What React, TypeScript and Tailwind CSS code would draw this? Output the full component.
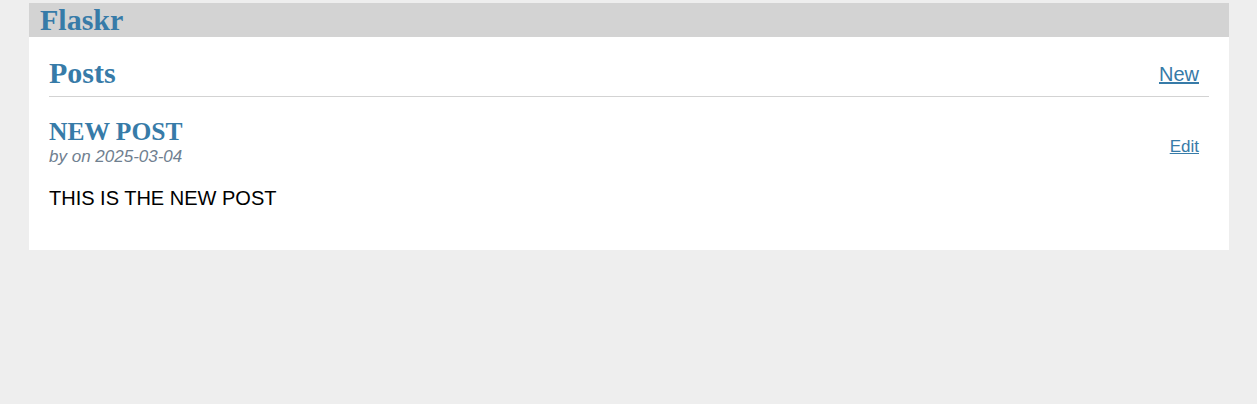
export default function App() {
  return (
    <div className="min-h-screen w-full bg-[#eeeeee] pt-[3px]" style={{ fontFamily: '"Liberation Sans", Arial, sans-serif' }}>
      <div className="ml-[29px] w-[1200px] bg-white">
        <nav className="flex h-[34px] items-center bg-[#d3d3d3] px-[11px]">
          <h1 className="flex-auto text-[30px] font-bold leading-[34px] text-[#377ba8]" style={{ fontFamily: '"Liberation Serif", "Times New Roman", serif' }}>
            Flaskr
          </h1>
        </nav>
        <section className="px-[20px] pb-[40px]">
          <header className="flex items-end border-b border-[#d3d3d3]">
            <h1 className="mt-[21px] mb-[8px] flex-auto text-[30px] font-bold leading-[30px] text-[#377ba8]" style={{ fontFamily: '"Liberation Serif", "Times New Roman", serif' }}>
              Posts
            </h1>
            <a href="#" className="block pr-[10px] pb-[10px] text-[20px] leading-[23px] text-[#377ba8] underline">
              New
            </a>
          </header>
          <article>
            <header className="flex items-end">
              <div className="flex-auto">
                <h1 className="mt-[20px] text-[25.5px] font-bold leading-[29px] text-[#377ba8]" style={{ fontFamily: '"Liberation Serif", "Times New Roman", serif' }}>
                  NEW POST
                </h1>
                <div className="pt-[1px] text-[17px] italic leading-[20px] text-[#708090]">by on 2025-03-04</div>
              </div>
              <a href="#" className="block pr-[10px] pb-[10px] text-[17px] leading-[20px] text-[#377ba8] underline">
                Edit
              </a>
            </header>
            <p className="mt-[20px] text-[20px] leading-[23px] text-black">THIS IS THE NEW POST</p>
          </article>
        </section>
      </div>
    </div>
  );
}
